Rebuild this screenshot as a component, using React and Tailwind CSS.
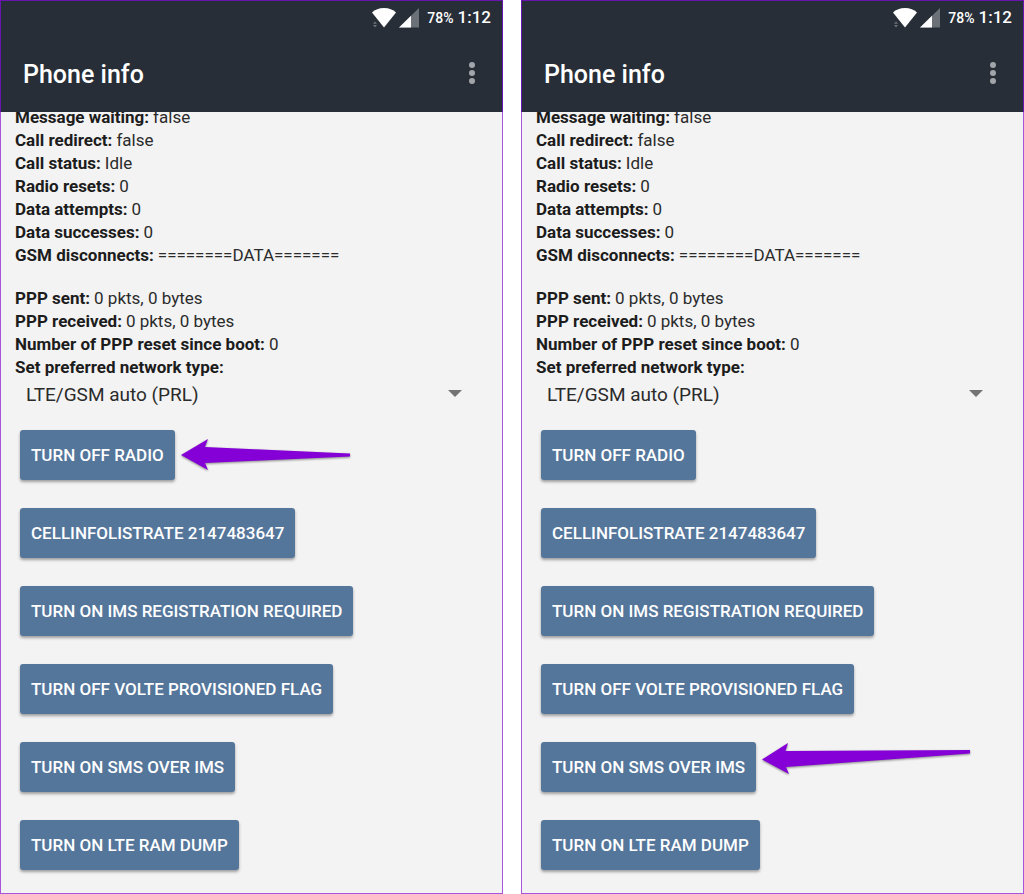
import { useId, useState } from 'react'

const callInfo = [
  ['Message waiting:', 'false'],
  ['Call redirect:', 'false'],
  ['Call status:', 'Idle'],
  ['Radio resets:', '0'],
  ['Data attempts:', '0'],
  ['Data successes:', '0'],
  ['GSM disconnects:', '========DATA======='],
]

const pppInfo = [
  ['PPP sent:', '0 pkts, 0 bytes'],
  ['PPP received:', '0 pkts, 0 bytes'],
  ['Number of PPP reset since boot:', '0'],
]

const actions = [
  { id: 'radio', label: 'TURN OFF RADIO' },
  { id: 'rate', label: 'CELLINFOLISTRATE 2147483647' },
  { id: 'ims', label: 'TURN ON IMS REGISTRATION REQUIRED' },
  { id: 'volte', label: 'TURN OFF VOLTE PROVISIONED FLAG' },
  { id: 'sms', label: 'TURN ON SMS OVER IMS' },
  { id: 'dump', label: 'TURN ON LTE RAM DUMP' },
]

function WifiIcon() {
  return (
    <svg width="26" height="20" viewBox="0 0 26 20" aria-hidden="true">
      <path d="M1 4.500C4 1.500 8 0 13 0s9 1.500 12 4.500L13 19.500z" fill="#fff" />
      <path d="M2 15.800L4 13.500l2 2.300zM2 17h4l-2 2.500z" fill="#6b7177" />
    </svg>
  )
}

function SignalIcon() {
  return (
    <svg width="20" height="20" viewBox="0 0 20 20" aria-hidden="true">
      <path d="M20 0v19.500H0z" fill="#6b7177" />
      <path d="M12 7.800v11.700H0z" fill="#fff" />
    </svg>
  )
}

function RadioArrow() {
  return (
    <svg className="ml-1.5 shrink-0 drop-shadow-[0_1px_1px_rgba(0,0,0,0.45)]" width="170" height="32" viewBox="0 0 170 32" aria-hidden="true">
      <path d="M0 16L27 0l-3 8 145 6.500v3L24 24l3 7z" fill="#8500d7" />
    </svg>
  )
}

function SmsArrow() {
  return (
    <svg className="ml-1.5 shrink-0 self-start drop-shadow-[0_1px_1px_rgba(0,0,0,0.45)]" width="209" height="34" viewBox="0 0 209 34" aria-hidden="true">
      <path d="M0 17.500L26 1l-2.500 8L208 8v3.500L24 25l3 7z" fill="#8500d7" />
    </svg>
  )
}

function InfoRows({ rows }) {
  return rows.map(([label, value]) => (
    <p key={label}>
      <b className="mr-1 font-bold text-[#1c1c1c]">{label}</b>
      {value}
    </p>
  ))
}

function PhoneScreen({ target, arrow }) {
  const selectId = useId()
  const [network, setNetwork] = useState('prl')

  return (
    <section className="flex min-w-0 flex-1 flex-col">
      <header className="border-x border-t border-[#6a14ae] bg-[#272e37] pb-[15px] text-white">
        <div className="flex h-[34px] items-center justify-end pr-[11px] font-medium">
          <WifiIcon />
          <span className="ml-0.5 mr-2"><SignalIcon /></span>
          <span className="mr-1 text-sm">78%</span>
          <span className="text-[17px]">1:12</span>
        </div>
        <div className="mt-[18px] flex h-11 items-center justify-between pl-[22px] pr-4">
          <h1 className="text-[25px] font-medium">Phone info</h1>
          <button aria-label="More options" className="px-2.5 pb-1">
            <svg width="8" height="24" viewBox="0 0 8 24" fill="#a1a5a9" aria-hidden="true">
              <circle cx="4" cy="4" r="3" />
              <circle cx="4" cy="12" r="3" />
              <circle cx="4" cy="20" r="3" />
            </svg>
          </button>
        </div>
      </header>

      <main className="flex-1 overflow-hidden border-x border-b border-[#a855dc] bg-[#f3f3f3] px-3.5 text-[17px] leading-[23px] text-[#2b2b2b]">
        <div className="-mt-1.5">
          <InfoRows rows={callInfo} />
        </div>
        <div className="mt-5">
          <InfoRows rows={pppInfo} />
          <label htmlFor={selectId} className="block font-bold text-[#1c1c1c]">Set preferred network type:</label>
        </div>

        <div className="relative mr-6">
          <select
            id={selectId}
            value={network}
            onChange={e => setNetwork(e.target.value)}
            className="h-[30px] w-full appearance-none bg-transparent pl-[11px] text-[19px]"
          >
            <option value="prl">LTE/GSM auto (PRL)</option>
            <option value="lte">LTE only</option>
          </select>
          <svg className="pointer-events-none absolute right-0.5 top-[11px]" width="14" height="8" viewBox="0 0 14 8" aria-hidden="true">
            <path d="M0 0h14L7 7z" fill="#737373" />
          </svg>
        </div>

        <div className="mb-[22px] ml-[5px] mt-[21px] flex flex-col gap-7">
          {actions.map(action => (
            <div key={action.id} className="flex items-center">
              <button className="h-[50px] shrink-0 whitespace-nowrap rounded-[3px] bg-[#55769b] px-[11px] font-medium text-white shadow-[0_2px_3px_rgba(0,0,0,0.35)]">
                {action.label}
              </button>
              {action.id === target && arrow}
            </div>
          ))}
        </div>
      </main>
    </section>
  )
}

export default function App() {
  return (
    <div className="flex min-h-screen gap-[18px] bg-white font-[Roboto,sans-serif]">
      <PhoneScreen target="radio" arrow={<RadioArrow />} />
      <PhoneScreen target="sms" arrow={<SmsArrow />} />
    </div>
  )
}
